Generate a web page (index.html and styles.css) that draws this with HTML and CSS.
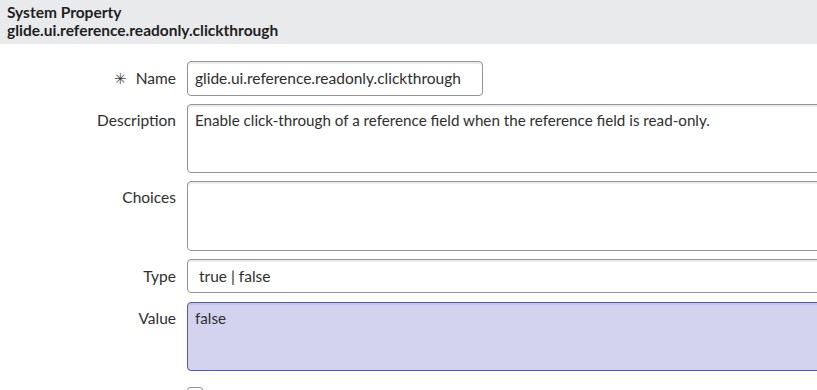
FILE: index.html
```html
<!DOCTYPE html>
<html>
<head>
<meta charset="utf-8">
<link rel="stylesheet" href="styles.css">
</head>
<body>
<div class="page">
<div class="header">
  <div class="h-title">System Property</div>
  <div class="h-name">glide.ui.reference.readonly.clickthrough</div>
</div>
<div class="form">
  <div class="row">
    <label class="label"><span class="req">&#x2733;</span>Name</label>
    <div class="field"><div class="input name-input">glide.ui.reference.readonly.clickthrough</div></div>
  </div>
  <div class="row">
    <label class="label area-label">Description</label>
    <div class="field"><div class="input area wide">Enable click-through of a reference field when the reference field is read-only.</div></div>
  </div>
  <div class="row">
    <label class="label area-label">Choices</label>
    <div class="field"><div class="input area choices wide"></div></div>
  </div>
  <div class="row">
    <label class="label">Type</label>
    <div class="field"><div class="input select wide">true | false</div></div>
  </div>
  <div class="row">
    <label class="label area-label">Value</label>
    <div class="field"><div class="input area value wide">false</div></div>
  </div>
  <div class="row last">
    <label class="label"></label>
    <div class="field"><div class="checkbox"></div></div>
  </div>
</div>
</div>
</body>
</html>
```
FILE: styles.css
```css
html, body {
  margin: 0;
  padding: 0;
  background: #ffffff;
}
body {
  font-family: Lato, "Open Sans", sans-serif;
  font-size: 15.5px;
  color: #2e2e2e;
}
.page {
  width: 817px;
  height: 390px;
  overflow: hidden;
}
.header {
  background: #e9eaec;
  padding: 3px 7px 5px;
  height: 36px;
  font-weight: bold;
  color: #1f1f1f;
  line-height: 18px;
}
.form {
  padding-top: 17px;
  display: flex;
  flex-direction: column;
}
.row {
  display: grid;
  grid-template-columns: 176px 1fr;
  column-gap: 11px;
  margin-bottom: 8px;
}
.label {
  text-align: right;
  line-height: 35px;
  color: #2e2e2e;
  white-space: nowrap;
}
.area-label {
  line-height: 33px;
}
.req {
  display: inline-block;
  margin-right: 9px;
  color: #444;
  font-size: 15px;
}
.field {
  min-width: 0;
  overflow: hidden;
}
.input {
  box-sizing: border-box;
  border: 1px solid #8f939c;
  border-radius: 4px;
  box-shadow: inset 0 2px 0 #ececee;
  background: #fff;
  padding: 0 7px;
  line-height: 33px;
  height: 35px;
  white-space: nowrap;
  color: #2e2e2e;
}
.wide {
  width: calc(100% + 10px);
}
.name-input {
  width: 296px;
}
.area {
  height: 69px;
  line-height: 20px;
  padding-top: 5px;
}
.area.wide:first-child {
  font-size: 15.2px;
}
.choices {
  height: 70px;
}
.select {
  height: 34px;
  line-height: 32px;
  padding-left: 11px;
}
.value {
  background: #d3d3f0;
  border-color: #5356c0;
  box-shadow: inset 0 2px 0 #c5c5e2;
}
.last .field {
  height: 20px;
}
.checkbox {
  box-sizing: border-box;
  width: 16px;
  height: 16px;
  border: 1px solid #8f939c;
  border-radius: 3px;
  margin-top: 8px;
}
```
